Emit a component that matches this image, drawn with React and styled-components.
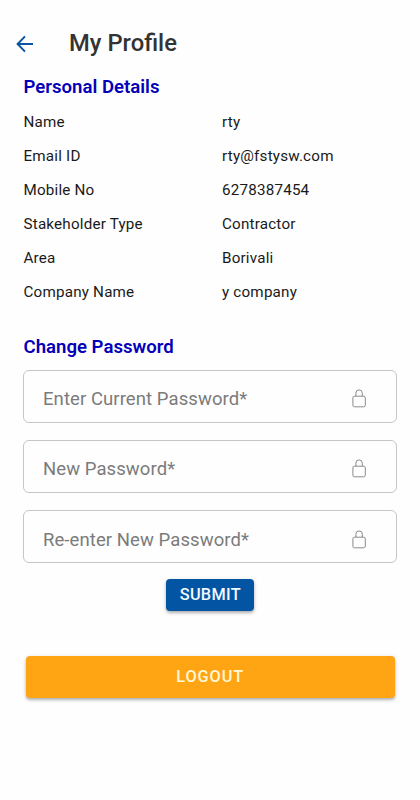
import { useState } from "react";
import styled, { createGlobalStyle } from "styled-components";

const GlobalStyle = createGlobalStyle`
  * {
    box-sizing: border-box;
  }

  body {
    margin: 0;
    background-color: #fefefe;
    font-family: Roboto, "Liberation Sans", sans-serif;
  }
`;

const Page = styled.div`
  width: 420px;
  height: 800px;
  overflow: hidden;
`;

const Header = styled.header`
  display: flex;
  align-items: center;
  gap: 32px;
  height: 44px;
  margin: 21px 0 10px;
  padding-left: 13px;
`;

const BackButton = styled.button`
  display: flex;
  width: 24px;
  height: 24px;
  margin-top: 1px;
  padding: 0;
  border: none;
  background: none;
  color: #0b55a5;
`;

const PageTitle = styled.h1`
  margin: 0;
  color: #333333;
  font-size: 23.8px;
  font-weight: 500;
  line-height: 28px;
`;

const Section = styled.section`
  padding: 0 23px;
`;

const SectionTitle = styled.h2`
  margin: 0 0.5px;
  color: #0400b8;
  font-size: 18.6px;
  font-weight: 600;
  line-height: 24px;
`;

const DetailList = styled.dl`
  margin: 6px 0.5px 26px;
`;

const DetailRow = styled.div`
  display: grid;
  grid-template-columns: 198.5px 1fr;
  align-items: center;
  height: 34px;
`;

const DetailLabel = styled.dt`
  color: #1a1a1a;
  font-size: 15.2px;
  letter-spacing: 0.2px;
`;

const DetailValue = styled.dd`
  margin: 0;
  color: #1a1a1a;
  font-size: 15.2px;
  letter-spacing: 0.2px;
`;

const Form = styled.form`
  display: flex;
  flex-direction: column;
  gap: 17.3px;
  margin-top: 10.5px;
`;

const Field = styled.label`
  display: flex;
  align-items: center;
  height: 53px;
  padding: 6px 29px 0 19px;
  border: 1px solid #c6c6c6;
  border-radius: 6px;
  color: #7b7b7b;
`;

const FieldName = styled.span`
  font-size: 18.5px;
  letter-spacing: 0.08px;
  white-space: nowrap;
`;

const FieldInput = styled.input`
  flex: 1;
  min-width: 0;
  border: none;
  outline: none;
  background: none;
  font: inherit;
`;

const Button = styled.button`
  border: none;
  border-radius: 4px;
  padding: 0;
  font-family: inherit;
  font-size: 16.3px;
  font-weight: 500;
  box-shadow: 0 2px 3px rgba(0, 0, 0, 0.25), 0 1px 5px rgba(0, 0, 0, 0.1);
`;

const SubmitButton = styled(Button)`
  align-self: center;
  width: 88px;
  height: 32px;
  margin: -1px 0 0 0.6px;
  padding-bottom: 2px;
  background-color: #0454a4;
  color: #f2fbff;
  letter-spacing: 0.3px;
`;

const LogoutButton = styled(Button)`
  display: block;
  width: 369.4px;
  height: 42.5px;
  margin: 44.5px 0 0 25.5px;
  padding-bottom: 1px;
  background-color: #ffa514;
  color: #fff8d8;
  letter-spacing: 0.9px;
`;

const ArrowIcon = () => (
  <svg width="24" height="24" viewBox="0 0 24 24" fill="none" stroke="currentColor" strokeWidth="2">
    <path d="M20 12H5M12 4.4L4.6 12l7.4 7.6" />
  </svg>
);

const LockIcon = () => (
  <svg width="16" height="20" viewBox="0 0 16 20" fill="none" stroke="#8a8a8a" strokeWidth="1">
    <rect x="1.9" y="7.2" width="12.4" height="10.6" rx="1.6" />
    <path d="M4.9 7.2V4.1a3.2 3.2 0 0 1 6.4 0v3.1" />
  </svg>
);

const details = [
  { label: "Name", value: "rty" },
  { label: "Email ID", value: "rty@fstysw.com" },
  { label: "Mobile No", value: "6278387454" },
  { label: "Stakeholder Type", value: "Contractor" },
  { label: "Area", value: "Borivali" },
  { label: "Company Name", value: "y company" },
];

const passwordFields = [
  { key: "current", label: "Enter Current Password*" },
  { key: "next", label: "New Password*" },
  { key: "confirm", label: "Re-enter New Password*" },
];

const App = () => {
  const [passwords, setPasswords] = useState({ current: "", next: "", confirm: "" });

  const handleChange = (key) => (e) => {
    setPasswords({ ...passwords, [key]: e.target.value });
  };

  return (
    <Page>
      <GlobalStyle />
      <Header>
        <BackButton type="button" aria-label="Back">
          <ArrowIcon />
        </BackButton>
        <PageTitle>My Profile</PageTitle>
      </Header>

      <Section>
        <SectionTitle>Personal Details</SectionTitle>
        <DetailList>
          {details.map((item) => (
            <DetailRow key={item.label}>
              <DetailLabel>{item.label}</DetailLabel>
              <DetailValue>{item.value}</DetailValue>
            </DetailRow>
          ))}
        </DetailList>
      </Section>

      <Section>
        <SectionTitle>Change Password</SectionTitle>
        <Form onSubmit={(e) => e.preventDefault()}>
          {passwordFields.map((field) => (
            <Field key={field.key}>
              {!passwords[field.key] && <FieldName>{field.label}</FieldName>}
              <FieldInput
                type="password"
                value={passwords[field.key]}
                onChange={handleChange(field.key)}
              />
              <LockIcon />
            </Field>
          ))}
          <SubmitButton type="submit">SUBMIT</SubmitButton>
        </Form>
      </Section>

      <LogoutButton type="button">LOGOUT</LogoutButton>
    </Page>
  );
};

export default App;
